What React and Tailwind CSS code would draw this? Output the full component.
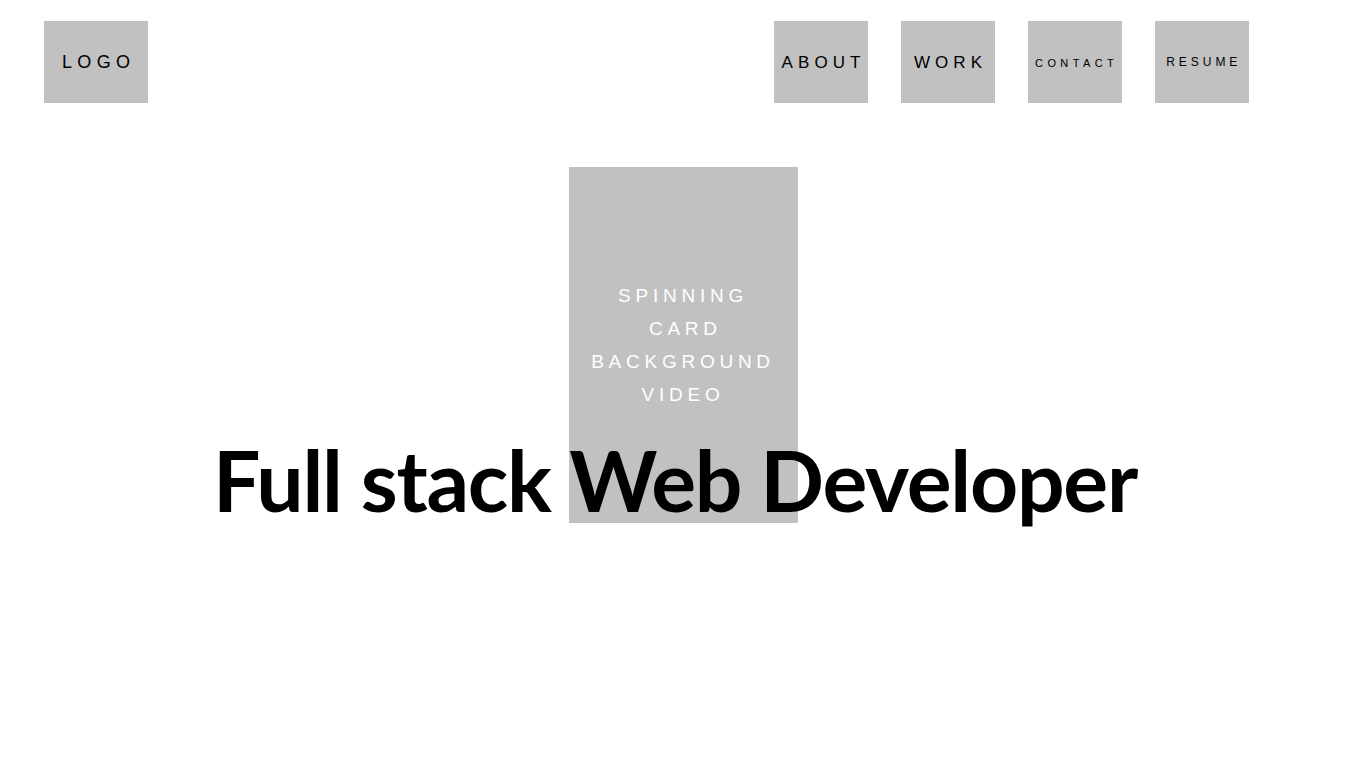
export default function App() {
  return (
    <div className="min-h-screen bg-white font-['Liberation_Sans',Arial,sans-serif]">
      {/* header */}
      <header className="flex items-start justify-between pt-[21px] pl-[44px] pr-[117px]">
        <div className="flex h-[82px] w-[104px] items-center justify-center bg-[#c1c1c1]">
          <span className="pl-[0.3em] text-[18px] tracking-[0.3em] text-black">LOGO</span>
        </div>
        <nav className="flex gap-[33px]">
          <NavBox label="ABOUT" className="text-[17px] tracking-[0.3em] pt-[2px]" />
          <NavBox label="WORK" className="text-[17px] tracking-[0.3em] pt-[2px]" />
          <NavBox label="CONTACT" className="text-[11px] tracking-[0.4em] pt-[2px]" />
          <NavBox label="RESUME" className="text-[12px] tracking-[0.33em]" />
        </nav>
      </header>

      {/* hero */}
      <main className="mt-[64px] grid justify-items-center">
        <div className="[grid-area:1/1] flex h-[356px] w-[229px] flex-col items-center justify-center bg-[#c1c1c1] text-center text-[19px] leading-[33px] tracking-[0.25em] text-white">
          <span>SPINNING</span>
          <span className="pl-[0.25em]">CARD</span>
          <span>BACKGROUND</span>
          <span>VIDEO</span>
        </div>
        <h1 className="[grid-area:1/1] self-end mb-[1px] pr-[16px] font-['Lato',sans-serif] text-[84px] font-bold leading-none tracking-[-0.015em] text-black">
          Full stack Web Developer
        </h1>
      </main>
    </div>
  );
}

function NavBox({ label, className }) {
  return (
    <div className="flex h-[82px] w-[94px] items-center justify-center bg-[#c1c1c1]">
      <span className={'pl-[0.3em] text-black ' + className}>{label}</span>
    </div>
  );
}
